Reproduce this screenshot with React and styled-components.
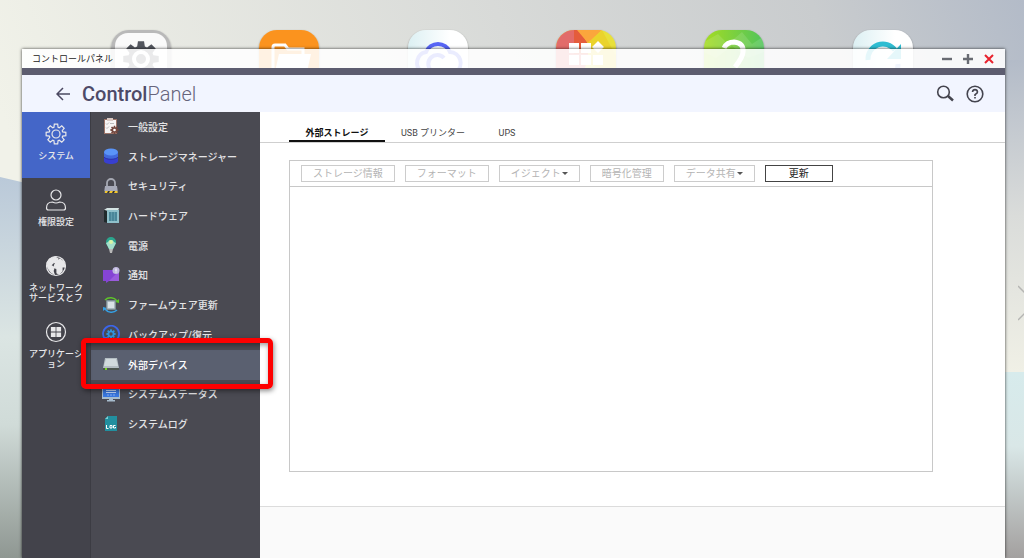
import React from "react";
import styled, { createGlobalStyle, css } from "styled-components";

const GlobalStyle = createGlobalStyle`
  * { box-sizing: border-box; }
  body {
    margin: 0;
    font-family: Roboto, "Noto Sans CJK JP", sans-serif;
    color: #333;
  }
  button {
    margin: 0;
    padding: 0;
    border: 0;
    background: none;
    font: inherit;
    color: inherit;
    cursor: pointer;
  }
  svg { display: block; flex: none; }
`;

const Desktop = styled.div`
  position: relative;
  display: flex;
  min-height: 100vh;
  padding: 49px 19px 0 22px;
  overflow: hidden;
`;

const Wallpaper = styled.svg`
  position: absolute;
  inset: 0;
  width: 100%;
  height: 100%;
`;

const Dock = styled.div`
  position: absolute;
  top: 30px;
  left: 0;
  right: 0;
  display: grid;
  grid-template-columns: repeat(6, 1fr);
  justify-items: center;
  padding: 0 67px;
`;

const AppTile = styled.button`
  width: 60px;
  height: 60px;
  border-radius: 18px;
  overflow: hidden;
  box-shadow: 0 1px 2px rgba(0, 0, 0, 0.45);
`;

const NextPage = styled.button`
  position: absolute;
  right: 0;
  top: 284px;
  width: 6px;
  height: 38px;
  overflow: hidden;
`;

const Window = styled.section`
  position: relative;
  display: flex;
  flex-direction: column;
  flex: 1;
  min-width: 0;
  box-shadow: 0 0 3px rgba(0, 0, 0, 0.75);
`;

const TitleBar = styled.div`
  display: flex;
  align-items: center;
  justify-content: space-between;
  height: 19px;
  padding: 0 10px;
  background: rgba(255, 255, 255, 0.88);
  font-size: 9px;
  color: #222;
`;

const WindowControls = styled.div`
  display: flex;
  gap: 9px;
`;

const Header = styled.header`
  display: flex;
  align-items: center;
  height: 44px;
  padding: 0 21px 0 34px;
  border-top: 7px solid #5d5d70;
  background: #f2f5ff;
  color: #4b4961;
`;

const Heading = styled.h1`
  flex: 1;
  margin: 0 0 0 12px;
  font-size: 20px;
  line-height: 24px;
  font-weight: 300;
  color: #66647c;

  b {
    font-weight: 500;
    color: #4d4a68;
  }
`;

const HeaderTools = styled.div`
  display: flex;
  gap: 12px;
`;

const Body = styled.div`
  display: flex;
  flex: 1;
`;

const CategoryNav = styled.nav`
  display: flex;
  flex-direction: column;
  width: 68px;
  background: #43434b;
  color: #e8e8ea;
`;

const Category = styled.button`
  display: flex;
  flex-direction: column;
  align-items: center;
  gap: 6px;
  height: 66px;
  padding: 11px 5px 0;
  font-size: 9px;
  line-height: 10px;
  font-weight: 500;
  word-break: break-all;
  background: ${(p) => (p.$active ? "#4466c8" : "transparent")};
`;

const Menu = styled.nav`
  position: relative;
  z-index: 1;
  width: 170px;
  border-left: 1px solid #3c3c43;
  background: #4a4a52;
`;

const MenuList = styled.div`
  display: grid;
  grid-auto-rows: 1fr;
  height: 327px;
`;

const MenuItem = styled.button`
  position: relative;
  display: flex;
  align-items: center;
  gap: 8px;
  padding: 0 0 1px 11px;
  font-size: 10px;
  font-weight: 500;
  text-align: left;
  color: #e4e4e6;
  ${(p) =>
    p.$active &&
    css`
      z-index: 1;
      background: #5a6070;
      color: #fff;
    `}
`;

const Highlight = styled.span`
  position: absolute;
  inset: -12px -13px -9px -10px;
  border: 5px solid #fe0000;
  border-radius: 5px;
  box-shadow: 1px 2px 5px rgba(0, 0, 0, 0.45), inset 1px 2px 5px rgba(0, 0, 0, 0.4);
`;

const Main = styled.main`
  display: flex;
  flex-direction: column;
  flex: 1;
  min-width: 0;
  background: #fff;
`;

const Tabs = styled.div`
  display: flex;
  height: 31px;
  padding: 15px 0 0 29px;
  border-bottom: 1px solid #cfcfcf;
`;

const Tab = styled.button`
  min-width: ${(p) => (p.$short ? "52px" : "96px")};
  border-bottom: 2px solid transparent;
  font-size: 9px;
  line-height: 13px;
  color: #444;
  ${(p) =>
    p.$active &&
    css`
      border-bottom-color: #111;
      font-weight: 700;
      color: #111;
    `}
`;

const Panel = styled.div`
  flex: 1;
  margin: 17px 72px 34px 29px;
  border: 1px solid #c8c8c8;
`;

const Toolbar = styled.div`
  display: flex;
  gap: 10px;
  padding: 4px 11px;
  border-bottom: 1px solid #c8c8c8;
`;

const ToolButton = styled.button`
  display: flex;
  align-items: center;
  height: 17px;
  padding: 0 ${(p) => (p.$primary ? "23px" : "11px")};
  border: 1px solid ${(p) => (p.$primary ? "#444" : "#ccc")};
  font-size: 10px;
  line-height: 15px;
  white-space: nowrap;
  color: ${(p) => (p.$primary ? "#222" : "#b4b4b4")};
`;

const Caret = styled.span`
  margin: 0 0 0 1px;
  border: 3px solid transparent;
  border-top: 3px solid #555;
  border-bottom: 0;
`;

const Footer = styled.footer`
  height: 52px;
  border-top: 1px solid #dcdcdc;
  background: #fafafa;
`;

/* A toothed ring: eight teeth round a circle centred on (cx, cy). */
const gearPath = (cx, cy, outer, inner) => {
  const points = [];
  for (let i = 0; i < 8; i++) {
    [[-0.3, inner], [-0.17, outer], [0.17, outer], [0.3, inner]].forEach(([d, r]) => {
      const a = (i * Math.PI) / 4 + d;
      points.push(`${(cx + r * Math.sin(a)).toFixed(2)} ${(cy - r * Math.cos(a)).toFixed(2)}`);
    });
  }
  return `M${points.join("L")}Z`;
};

const tiles = [
  ["コントロールパネル", (
    <>
      <rect width="60" height="60" rx="16" fill="#b9b9b9" />
      <rect x="4" y="3" width="52" height="54" rx="13" fill="#fafafa" />
      <path d={gearPath(30, 29, 18, 13)} fill="#53565e" />
      <circle cx="30" cy="29" r="7" fill="none" stroke="#fff" strokeWidth="4" />
    </>
  )],
  ["ファイル", (
    <>
      <rect width="60" height="60" fill="#fb931e" />
      <path d="M14 40V17q0-2 2-2h10l3 4h15v6" fill="none" stroke="#fff" strokeWidth="3" />
      <path d="M20 24h32l-5 22H15z" fill="#fff" />
    </>
  )],
  ["クラウド", (
    <>
      <rect width="60" height="60" fill="url(#pale)" />
      <path d="M18 22a13 13 0 0 1 24 0a11 11 0 0 1 6 20H14a11 11 0 0 1 4-20z" fill="none" stroke="#5765f5" strokeWidth="4" />
      <path d="M36 28a9 9 0 1 0 0 12" fill="none" stroke="#5765f5" strokeWidth="4" />
    </>
  )],
  ["アプリセンター", (
    <>
      <rect width="60" height="60" fill="#e8e03a" />
      <path d="M0 0h20l14 16-10 44H0z" fill="#e26c6a" />
      <path d="M18 0h6l8 14v10H18z" fill="#e45c3c" />
      <path d="M21 0h25L32 13z" fill="#fba63c" />
      <path d="M46 0L32 13v20l28 12V26z" fill="#ead32c" />
      <path d="M13 13h10v10H13zM25 13h10v10H25zM42 11l6 6-6 6-6-6zM13 25h10v10H13zM25 25h10v10H25zM37 25h10v10H37z" fill="#fff" />
    </>
  )],
  ["ヘルプ", (
    <>
      <rect width="60" height="60" fill="url(#green)" />
      <path d="M0 12L14 4l10 10L38 2l10 12L60 6v16L44 28 28 16 12 28 0 22z" fill="#fff" opacity=".12" />
      <path d="M20 18Q23 12 30 12q10 1 9 10 0 5-8 15" fill="none" stroke="#fff" strokeWidth="5" />
    </>
  )],
  ["同期", (
    <>
      <rect width="60" height="60" fill="url(#pale)" />
      <path d="M15 30a15 15 0 0 1 27-10" fill="none" stroke="#2fbdd2" strokeWidth="5" />
      <path d="M48 14v15H34z" fill="#2fbdd2" />
      <path d="M45 34a15 15 0 0 1-27 10" fill="none" stroke="#88a8e8" strokeWidth="5" />
    </>
  )],
];

const categories = [
  { label: "システム", active: true, art: (
    <>
      <path d={gearPath(11, 11, 10, 7)} />
      <circle cx="11" cy="11" r="4" />
    </>
  ) },
  { label: "権限設定", art: (
    <>
      <circle cx="11" cy="6" r="5" />
      <path d="M3.500 21q-2 0-2-2 0-6 6-6 3.500 2 7 0 6 0 6 6 0 2-2 2z" />
    </>
  ) },
  { label: "ネットワークサービスとフ", art: (
    <>
      <circle cx="11" cy="11" r="9.500" />
      <path d="M2 8l3-4 5-2 3 2-2 3-3 1-2 2 3 3-1 3 1 3-3-2-3-4zM12 7l3-3 4 3 1 5-3 0 0 4-3 3-2-1 0-4-3-2 1-3z" fill="currentColor" />
    </>
  ) },
  { label: "アプリケーション", art: (
    <>
      <circle cx="11" cy="11" r="9.500" />
      <path d="M6.500 6.500h3.500v3.500H6.500zM12 6.500h3.500v3.500H12zM6.500 12h3.500v3.500H6.500zM12 12h3.500v3.500H12z" fill="currentColor" />
    </>
  ) },
];

const menu = [
  ["一般設定", (
    <>
      <rect x="2" y="2" width="13" height="15" fill="#9c7468" />
      <rect x="3" y="3" width="11" height="13" fill="#f6f4f4" />
      <rect x="5" y="1" width="6" height="3" fill="#d9c9c4" />
      <path d="M4 6.500l1 1 2-2M8 6.500h4M4 10.500l1 1 2-2" fill="none" stroke="#bbb" />
      <path d={gearPath(12.5, 13, 4.3, 3)} fill="#74483f" />
      <circle cx="12.500" cy="13" r="1.300" fill="#fff" />
    </>
  )],
  ["ストレージマネージャー", (
    <>
      <path d="M2 5v9c0 4 14 4 14 0V5z" fill="#383fd0" />
      <path d="M2 5v5c2 3 12 3 14 0V5z" fill="#4169dc" />
      <path d="M2 10c2 3 12 3 14 0" fill="none" stroke="#2c33a8" />
      <ellipse cx="9" cy="5" rx="7" ry="3.500" fill="#5a94f8" />
    </>
  )],
  ["セキュリティ", (
    <>
      <path d="M5 10V6a4 4 0 0 1 8 0v4" fill="none" stroke="#a5a8b2" strokeWidth="1.800" />
      <path d="M3 9h12l1 7H2z" fill="#a7aab8" />
      <path d="M2.500 14h13v2h-13z" fill="#333" />
      <path d="M3 14h3l-1 2H3zM8 14h3l-1 2H7zM13 14h2.500v2H12z" fill="#f2c62d" />
    </>
  )],
  ["ハードウェア", (
    <>
      <path d="M2 3l3-2h12l-1 3H5z" fill="#d5e4e4" />
      <path d="M2 3l4 1v12l-4-1z" fill="#202a2c" />
      <rect x="5" y="3" width="12" height="13" fill="#8fc0ca" />
      <rect x="7" y="5" width="8" height="9" fill="#4a8799" />
      <path d="M9.500 5v9M12.500 5v9" stroke="#5f9aab" />
    </>
  )],
  ["電源", (
    <>
      <path d="M9 1a5 5 0 0 1 5 5c0 3-2 4-3 7H7C6 10 4 9 4 6a5 5 0 0 1 5-5z" fill="#2ba58d" />
      <path d="M9 4a3 3 0 0 1 3 2l2 1-3 6H7L4 7l2-1a3 3 0 0 1 3-2z" fill="#a5dfcb" />
      <circle cx="9" cy="6" r="2" fill="#d9f5a5" />
      <path d="M7 13h4l-1 4H8z" fill="#b8b8b8" />
    </>
  )],
  ["通知", (
    <>
      <path d="M1 4h16v11H7l-3 2v-2H1z" fill="#8544d4" />
      <path d="M17 5v10H7z" fill="#9a5bdd" />
      <circle cx="14" cy="4.500" r="3.500" fill="#c0b8df" />
      <path d="M14 2.500v2.500M14 5.500v1" stroke="#fff" />
    </>
  )],
  ["ファームウェア更新", (
    <>
      <path d="M3 4a8 8 0 0 1 12 1" fill="none" stroke="#5ec42a" strokeWidth="1.500" />
      <path d="M17 7V3l-4 3z" fill="#5ec42a" />
      <path d="M15 14a8 8 0 0 1-12-1" fill="none" stroke="#35a0e4" strokeWidth="1.500" />
      <path d="M1 11v4l4-3z" fill="#35a0e4" />
      <rect x="4" y="4" width="10" height="10" rx="1" fill="#7d8b92" />
      <rect x="5" y="5" width="8" height="8" rx="1" fill="#aab8bf" />
      <rect x="6" y="6" width="6" height="6" fill="#d9e2e6" />
    </>
  )],
  ["バックアップ/復元", (
    <>
      <path d="M3 14a8 8 0 1 1 4 2.500" fill="none" stroke="#3c66ea" strokeWidth="1.800" />
      <path d="M1 12l5 0-2 4z" fill="#3c66ea" />
      <path d={gearPath(9, 9, 4.8, 3.5)} fill="#3193dc" />
      <circle cx="9" cy="9" r="1.700" fill="#4a4a52" />
    </>
  )],
  ["外部デバイス", (
    <>
      <path d="M3 3h12l2 10H1z" fill="#b4bec3" />
      <path d="M4 4h10l2 7H2z" fill="#d1dadd" />
      <path d="M1 13h16v2H1z" fill="#4c5550" />
      <path d="M3 13h2v2H3z" fill="#77d52b" />
    </>
  )],
  ["システムステータス", (
    <>
      <rect x="0" y="2" width="18" height="12" fill="#a7bccd" />
      <rect x="1" y="2" width="16" height="10" fill="#3a78e0" />
      <path d="M4 5.500h10M4 7.500h10" stroke="#c6dcff" />
      <path d="M5 10h8" stroke="#86aff5" strokeDasharray="2 1" />
      <path d="M7 14h4v1h2v1.500H5V15h2z" fill="#a7bccd" />
    </>
  )],
  ["システムログ", (
    <>
      <path d="M6 1h9v15H3V4z" fill="#228f9f" />
      <path d="M3 4l3-3v3z" fill="#7ad0d6" />
      <path d="M4.500 10v3.500h2M8 10.500h2v2.500H8zM13.500 10.500h-2v2.500h2v-1" fill="none" stroke="#fff" />
    </>
  )],
];

const tools = [
  { label: "ストレージ情報" },
  { label: "フォーマット" },
  { label: "イジェクト", caret: true },
  { label: "暗号化管理" },
  { label: "データ共有", caret: true },
  { label: "更新", primary: true },
];

export default function App() {
  return (
    <Desktop>
      <GlobalStyle />
      <Wallpaper viewBox="0 0 1024 558" preserveAspectRatio="none" aria-hidden="true">
        <defs>
          <linearGradient id="sky" x1="0" y1=".2" x2="1" y2="0">
            <stop offset="0" stopColor="#f1f2e9" />
            <stop offset=".5" stopColor="#d8dad8" />
            <stop offset=".8" stopColor="#c9ccce" />
            <stop offset="1" stopColor="#b3bbc8" />
          </linearGradient>
          <linearGradient id="left" x1="0" y1="0" x2="0" y2="1">
            <stop offset="0" stopColor="#bac9d9" />
            <stop offset=".42" stopColor="#dbe5e3" />
            <stop offset=".65" stopColor="#d0dbd8" />
            <stop offset="1" stopColor="#8f9792" />
          </linearGradient>
          <linearGradient id="right" x1="0" y1="0" x2="0" y2="1">
            <stop offset="0" stopColor="#b3bbc8" />
            <stop offset=".5" stopColor="#dadcda" />
            <stop offset="1" stopColor="#f0f0e6" />
          </linearGradient>
          <linearGradient id="rightLow" x1="0" y1="0" x2="0" y2="1">
            <stop offset="0" stopColor="#d7ebec" />
            <stop offset=".4" stopColor="#d9e7e7" />
            <stop offset="1" stopColor="#a3a09f" />
          </linearGradient>
          <linearGradient id="pale" x1="0" y1="0" x2="1" y2="0">
            <stop offset="0" stopColor="#dcf0f3" />
            <stop offset=".7" stopColor="#fff" />
          </linearGradient>
          <linearGradient id="green" x1="0" y1="0" x2="1" y2="0">
            <stop offset="0" stopColor="#a5dc22" />
            <stop offset="1" stopColor="#51c45c" />
          </linearGradient>
        </defs>
        <path d="M0 0h1024v558H0z" fill="url(#sky)" />
        <path d="M0 177l30 7v374H0z" fill="url(#left)" />
        <path d="M1000 60h24v312h-24z" fill="url(#right)" />
        <path d="M1000 372h24v186h-24z" fill="url(#rightLow)" />
      </Wallpaper>

      <Dock>
        {tiles.map(([name, art]) => (
          <AppTile key={name} aria-label={name}>
            <svg width="60" height="60" viewBox="0 0 60 60">{art}</svg>
          </AppTile>
        ))}
      </Dock>
      <NextPage aria-label="次のページ">
        <svg width="20" height="38" viewBox="0 0 20 38" fill="none" stroke="#b5b5b3" strokeWidth="1.500">
          <path d="M0 2l17 17L0 36" />
        </svg>
      </NextPage>

      <Window>
        <TitleBar>
          <span>コントロールパネル</span>
          <WindowControls>
            <button aria-label="最小化">
              <svg width="12" height="12" viewBox="0 0 12 12" stroke="#686b72" strokeWidth="2.400"><path d="M1 6h10" /></svg>
            </button>
            <button aria-label="最大化">
              <svg width="12" height="12" viewBox="0 0 12 12" stroke="#686b72" strokeWidth="2.400"><path d="M1 6h10M6 1v10" /></svg>
            </button>
            <button aria-label="閉じる">
              <svg width="12" height="12" viewBox="0 0 12 12" stroke="#e8222e" strokeWidth="2"><path d="M2 2l8 8M10 2l-8 8" /></svg>
            </button>
          </WindowControls>
        </TitleBar>
        <Header>
          <button aria-label="戻る">
            <svg width="14" height="14" viewBox="0 0 14 14" fill="none" stroke="currentColor" strokeWidth="1.500"><path d="M14 7H1M7 1L1 7l6 6" /></svg>
          </button>
          <Heading><b>Control</b>Panel</Heading>
          <HeaderTools>
            <button aria-label="検索">
              <svg width="18" height="18" viewBox="0 0 18 18" fill="none" stroke="#44444e" strokeWidth="1.600">
                <circle cx="7.500" cy="7" r="5.800" />
                <path d="M12 11l5 4.500" strokeWidth="2.500" />
              </svg>
            </button>
            <button aria-label="ヘルプ">
              <svg width="18" height="18" viewBox="0 0 18 18" fill="none" stroke="#44444e" strokeWidth="1.600">
                <circle cx="9" cy="9" r="7.800" />
                <path d="M6.500 7q.3-2.400 2.500-2.400T11.500 7Q11.500 8.200 9 9.600V11M9 12v1.600" />
              </svg>
            </button>
          </HeaderTools>
        </Header>

        <Body>
          <CategoryNav>
            {categories.map(({ label, active, art }) => (
              <Category key={label} $active={active}>
                <svg width="22" height="22" viewBox="0 0 22 22" fill="none" stroke="currentColor" strokeWidth="1.200">{art}</svg>
                <span>{label}</span>
              </Category>
            ))}
          </CategoryNav>
          <Menu>
            <MenuList>
              {menu.map(([label, art]) => {
                const active = label === "外部デバイス";
                return (
                  <MenuItem key={label} $active={active}>
                    <svg width="18" height="18" viewBox="0 0 18 18">{art}</svg>
                    {label}
                    {active && <Highlight />}
                  </MenuItem>
                );
              })}
            </MenuList>
          </Menu>
          <Main>
            <Tabs role="tablist">
              <Tab role="tab" aria-selected="true" $active>外部ストレージ</Tab>
              <Tab role="tab" aria-selected="false">USB プリンター</Tab>
              <Tab role="tab" aria-selected="false" $short>UPS</Tab>
            </Tabs>
            <Panel>
              <Toolbar>
                {tools.map(({ label, caret, primary }) => (
                  <ToolButton key={label} $primary={primary} disabled={!primary}>
                    {label}
                    {caret && <Caret />}
                  </ToolButton>
                ))}
              </Toolbar>
            </Panel>
            <Footer />
          </Main>
        </Body>
      </Window>
    </Desktop>
  );
}
